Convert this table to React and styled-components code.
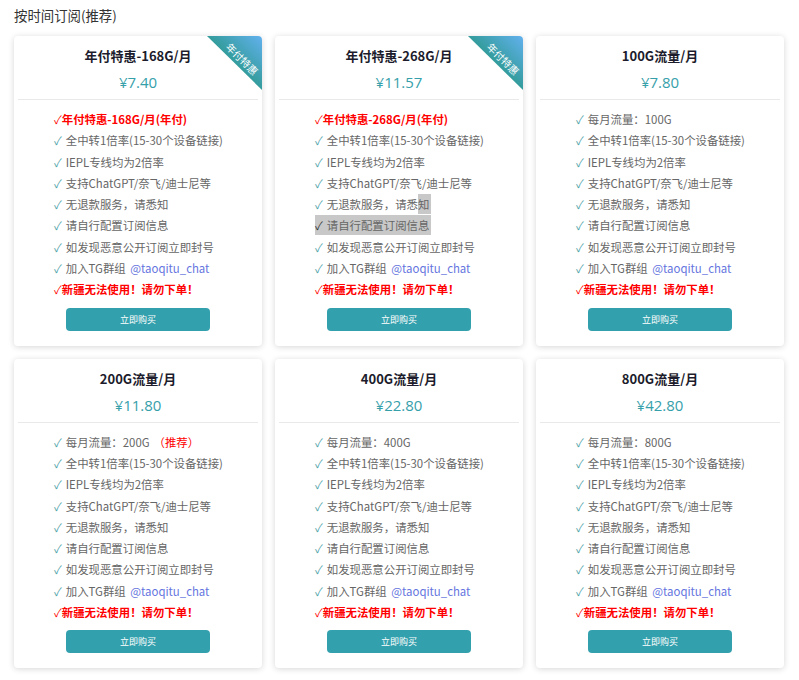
import styled, { createGlobalStyle } from "styled-components"

const GlobalStyle = createGlobalStyle`
body{
    margin: 0;
    background: #fff;
    font-family: "Noto Sans CJK SC", "Noto Sans", sans-serif;
}
`

const common = [
    "全中转1倍率(15-30个设备链接)",
    "IEPL专线均为2倍率",
    "支持ChatGPT/奈飞/迪士尼等",
    "无退款服务，请悉知",
    "请自行配置订阅信息",
    "如发现恶意公开订阅立即封号",
]

const plans = [
    { name: "年付特惠-168G/月", price: "¥7.40", first: "年付特惠-168G/月(年付)", firstRed: true, ribbon: true },
    { name: "年付特惠-268G/月", price: "¥11.57", first: "年付特惠-268G/月(年付)", firstRed: true, ribbon: true, selected: true },
    { name: "100G流量/月", price: "¥7.80", first: "每月流量：100G" },
    { name: "200G流量/月", price: "¥11.80", first: "每月流量：200G", hot: true },
    { name: "400G流量/月", price: "¥22.80", first: "每月流量：400G" },
    { name: "800G流量/月", price: "¥42.80", first: "每月流量：800G" },
]

export default function App() {
    return (
        <Pagina>
            <GlobalStyle />
            <Cabecalho>按时间订阅(推荐)</Cabecalho>
            <Grade>
                {plans.map((p) => (
                    <Cartao key={p.name}>
                        {p.ribbon && <Fita><span>年付特惠</span></Fita>}
                        <Titulo>{p.name}</Titulo>
                        <Preco>{p.price}</Preco>
                        <Divisor />
                        <Lista>
                            <Item red={p.firstRed}>
                                <Check red={p.firstRed}>✓</Check>{p.first}
                                {p.hot && <Recomenda>（推荐）</Recomenda>}
                            </Item>
                            {common.map((t, i) => {
                                if (p.selected && i === 3) {
                                    return <Item key={t}><Check>✓</Check>无退款服务，请悉<Marcado>知</Marcado></Item>
                                }
                                if (p.selected && i === 4) {
                                    return <Item key={t}><Marcado><Check sel>✓</Check>{t}</Marcado></Item>
                                }
                                return <Item key={t}><Check>✓</Check>{t}</Item>
                            })}
                            <Item><Check>✓</Check>加入TG群组 <Link>@taoqitu_chat</Link></Item>
                            <Item red><Check red>✓</Check>新疆无法使用！请勿下单！</Item>
                        </Lista>
                        <Botao>立即购买</Botao>
                    </Cartao>
                ))}
            </Grade>
        </Pagina>
    )
}

const Pagina = styled.main`
padding: 5px 14px 10px;
`
const Cabecalho = styled.div`
font-size: 13.4px;
line-height: 20px;
color: #333;
margin-bottom: 11px;
`
const Grade = styled.div`
display: grid;
grid-template-columns: repeat(3, 248px);
gap: 13px;
`
const Cartao = styled.div`
position: relative;
overflow: hidden;
display: flex;
flex-direction: column;
padding: 10px 4px 15px;
background: #fff;
border-radius: 4px;
box-shadow: 0 1px 6px rgba(0,0,0,0.16);
`
const Fita = styled.div`
position: absolute;
top: 0;
right: 0;
width: 55px;
height: 54px;
clip-path: polygon(0 0, 100% 0, 100% 100%);
background: linear-gradient(to top right, #2f9a94 45%, #62b1ee 100%);
span{
    position: absolute;
    top: 17px;
    right: 0;
    transform: rotate(45deg);
    font-size: 10px;
    line-height: 12px;
    color: #fff;
    white-space: nowrap;
}
`
const Titulo = styled.h1`
margin: 0;
text-align: center;
font-size: 13px;
line-height: 20px;
font-weight: bold;
color: #1c1c2c;
`
const Preco = styled.div`
margin-top: 4px;
text-align: center;
font-family: "Open Sans", sans-serif;
font-size: 15px;
line-height: 24px;
color: #36a0aa;
`
const Divisor = styled.div`
margin-top: 5px;
height: 1px;
background: #e9e9e9;
`
const Lista = styled.ul`
list-style: none;
margin: 0;
padding: 9px 0 0 36px;
`
const Item = styled.li`
height: 21.3px;
font-size: 11.4px;
line-height: 21.3px;
white-space: nowrap;
color: ${(p) => (p.red ? "#ff0000" : "#666")};
font-weight: ${(p) => (p.red ? "bold" : "normal")};
`
const Check = styled.span`
margin-right: ${(p) => (p.red ? "0" : "4px")};
color: ${(p) => (p.red ? "#ff0000" : p.sel ? "#333" : "#4ea3a8")};
font-weight: normal;
`
const Marcado = styled.span`
background: #c8c8c8;
padding: 2px 2px 2px 0;
`
const Link = styled.span`
margin-left: 2px;
color: #6676e0;
`
const Recomenda = styled.span`
margin-left: 4px;
color: #ff0000;
`
const Botao = styled.button`
margin: 7px auto 0;
width: 144px;
height: 23px;
border: none;
border-radius: 4px;
background: #33a1ad;
color: #fff;
font-family: "Noto Sans CJK SC", sans-serif;
font-size: 9px;
cursor: pointer;
`
